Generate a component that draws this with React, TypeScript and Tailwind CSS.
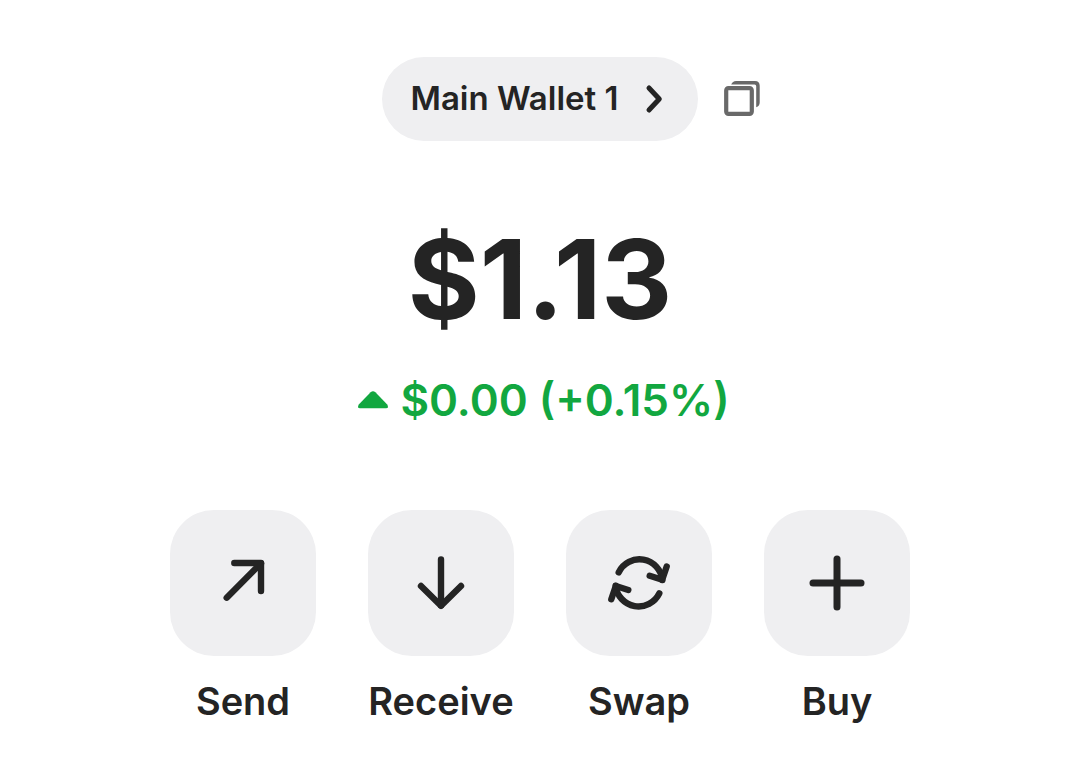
import type { ReactNode } from "react";

function SendIcon() {
  return (
    <>
      <path d="M15.7 46.7 50 12.3" />
      <path d="M23.3 12H50v28" />
    </>
  );
}

function ReceiveIcon() {
  return (
    <>
      <path d="M32 8.5v46" />
      <path d="M12 35 32 54.8 52 35" />
    </>
  );
}

function SwapIcon() {
  return (
    <>
      <path d="M11.7 21.3A23 23 0 0 1 55.3 29" />
      <path d="M42.7 24.7 55.2 28.7 59.7 15.5" />
      <path d="M52.3 42.4A23 23 0 0 1 8.7 34.7" />
      <path d="M21.3 39 8.8 35 4.3 48.2" />
    </>
  );
}

function BuyIcon() {
  return (
    <>
      <path strokeWidth="7" d="M32 8v48" />
      <path strokeWidth="7" d="M8 32h48" />
    </>
  );
}

type Action = { label: string; icon: ReactNode };

const actions: Action[] = [
  { label: "Send", icon: <SendIcon /> },
  { label: "Receive", icon: <ReceiveIcon /> },
  { label: "Swap", icon: <SwapIcon /> },
  { label: "Buy", icon: <BuyIcon /> },
];

function ActionButton({ label, icon }: Action) {
  return (
    <button type="button" className="flex w-[146px] flex-col items-center gap-5">
      <span className="flex h-[146px] w-full items-center justify-center rounded-[44px] bg-[#efeff1]">
        <svg
          viewBox="0 0 64 64"
          className="size-16"
          fill="none"
          stroke="currentColor"
          strokeWidth="6.4"
          strokeLinecap="round"
          strokeLinejoin="round"
          aria-hidden="true"
        >
          {icon}
        </svg>
      </span>
      <span className="text-[38px] leading-[50px] font-semibold">{label}</span>
    </button>
  );
}

export default function App() {
  return (
    <main className="flex min-h-screen flex-col items-center bg-white px-6 pt-[57px] pb-10 font-['Inter',sans-serif] text-[#242424]">
      <header className="grid w-full grid-cols-[1fr_auto_1fr] items-center gap-[26px]">
        <button
          type="button"
          className="col-start-2 flex h-[84px] items-center gap-[26px] rounded-full bg-[#efeff1] pr-[35px] pl-7 text-[33px] font-semibold whitespace-nowrap"
        >
          Main Wallet 1
          <svg
            viewBox="0 0 18 30"
            className="h-[30px] w-[18px]"
            fill="none"
            stroke="currentColor"
            strokeWidth="5"
            strokeLinecap="round"
            strokeLinejoin="round"
            aria-hidden="true"
          >
            <path d="M4 4 14.3 15 4 26" />
          </svg>
        </button>
        <button type="button" aria-label="Copy address" className="justify-self-start text-[#696969]">
          <svg viewBox="0 0 36 36" className="size-9" aria-hidden="true">
            <rect x="2.2" y="7.2" width="25.6" height="25.6" rx="2.2" fill="none" stroke="currentColor" strokeWidth="4.2" />
            <path
              d="M7.2 3.6Q8.6 0 12 0H31Q35.7 0 35.7 4.7V21.5Q35.7 25 32.2 26.3V5.2Q32.2 3.6 30.6 3.6Z"
              fill="currentColor"
            />
          </svg>
        </button>
      </header>

      <h1 className="mt-[72px] text-[110px] leading-[132px] font-bold">$1.13</h1>

      <p className="mt-[25px] flex items-center gap-3 pl-2 text-[44px] leading-[60px] font-semibold text-[#12a740]">
        <svg viewBox="0 0 30 18" className="h-[18px] w-[30px]" fill="currentColor" aria-hidden="true">
          <path d="M12.6 1.3Q15-.9 17.4 1.3L29.2 13.6Q31.2 17.3 28 17.3H2Q-1.2 17.3.8 13.6Z" />
        </svg>
        $0.00 (+0.15%)
      </p>

      <nav aria-label="Wallet actions" className="mt-20 flex flex-wrap justify-center gap-[52px]">
        {actions.map((action) => (
          <ActionButton key={action.label} {...action} />
        ))}
      </nav>
    </main>
  );
}
